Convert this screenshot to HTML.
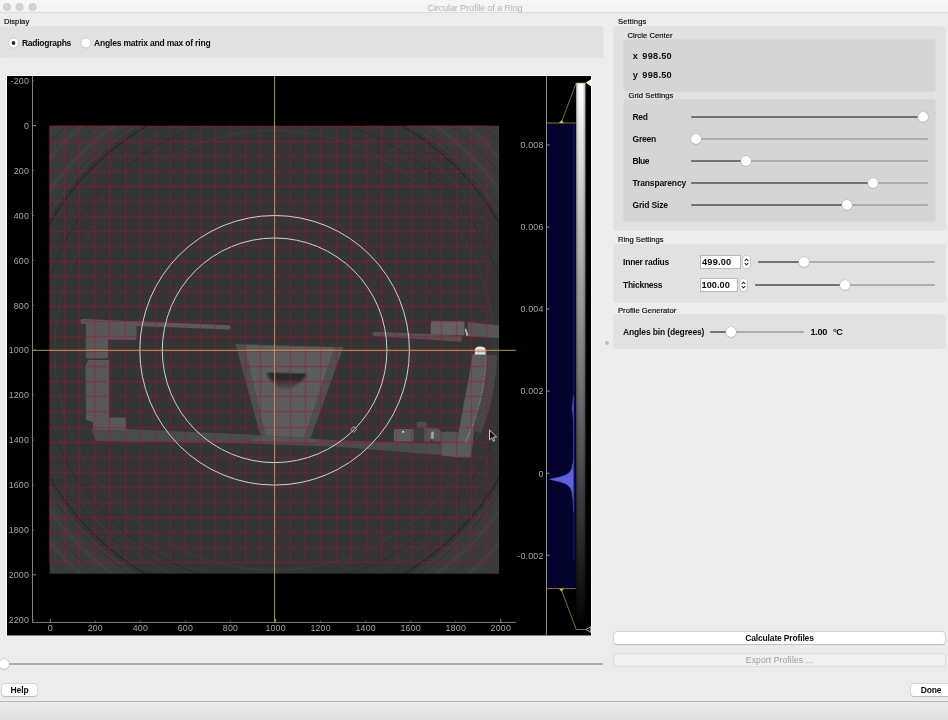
<!DOCTYPE html>
<html lang="en">
<head>
<meta charset="utf-8">
<title>Circular Profile of a Ring</title>
<style>
html,body{margin:0;padding:0;}
body{width:948px;height:720px;overflow:hidden;background:#ececec;position:relative;
  font-family:"Liberation Sans",sans-serif;font-size:7.6px;color:#0c0c0c;}
.abs{position:absolute;}
.t{position:absolute;white-space:nowrap;line-height:12px;height:12px;-webkit-text-stroke:0.18px #0c0c0c;}
.b,.btn{-webkit-text-stroke:0;}
#title{-webkit-text-stroke:0;}
.b{font-weight:bold;font-size:8.5px;}
.n{font-size:9.2px;}
.titlebar{left:0;top:0;width:948px;height:13px;background:linear-gradient(#f7f7f7,#f3f3f3);border-bottom:1px solid #dcdcdc;box-sizing:border-box;}
.tl{position:absolute;top:3px;width:8px;height:8px;border-radius:50%;background:#d4d4d4;box-shadow:inset 0 0 0 0.5px #c4c4c4;}
.gb{position:absolute;background:#e1e1e1;border-radius:2.5px;box-shadow:0 0 0 0.5px #dadada;}
.gb2{position:absolute;background:#d5d5d5;border-radius:2.5px;box-shadow:0 0 0 0.5px #cfcfcf;}
.trk{position:absolute;height:2px;background:#adadad;border-radius:1px;}
.trk i{position:absolute;left:0;top:0;height:2px;background:#727272;border-radius:1px;display:block;}
.knob{position:absolute;width:10px;height:10px;border-radius:50%;background:#fff;box-shadow:0 0 0 0.5px #b4b4b4,0 0.5px 1px rgba(0,0,0,.25);}
.radio{position:absolute;width:10px;height:10px;border-radius:50%;background:#fff;box-shadow:0 0 0 0.5px #b0b0b0,0 0.5px 1px rgba(0,0,0,.15);}
.radio.on:after{content:"";position:absolute;left:3.2px;top:3.2px;width:3.6px;height:3.6px;border-radius:50%;background:#222;}
.btn{position:absolute;background:#fff;border-radius:3px;box-shadow:0 0 0 0.5px #c2c2c2,0 0.5px 1px rgba(0,0,0,.22);text-align:center;font-weight:bold;line-height:12px;font-size:8.5px;}
.spin{position:absolute;background:#fff;border:1px solid #b9b9b9;box-sizing:border-box;}
.step{position:absolute;background:#fff;border-radius:3px;box-shadow:0 0 0 0.5px #b8b8b8,0 0.5px 1px rgba(0,0,0,.2);}
</style>
</head>
<body>
<div id="root" style="position:absolute;left:0;top:0;width:948px;height:720px;will-change:transform;">
<!-- title bar -->
<div class="abs titlebar"></div>
<svg class="abs" style="left:0;top:0" width="40" height="13"><g fill="#d3d3d3" stroke="#c6c6c6" stroke-width="0.5"><circle cx="7" cy="7" r="3.8"/><circle cx="19.6" cy="7" r="3.8"/><circle cx="32.6" cy="7" r="3.8"/></g></svg>
<div class="t" id="title" style="letter-spacing:-0.175px;left:0;width:950px;top:1.6px;text-align:center;color:#b4b4b4;font-size:9.2px;">Circular Profile of a Ring</div>

<!-- left: display group -->
<div class="t" id="lDisplay" style="letter-spacing:0.049px;left:4px;top:15.7px;">Display</div>
<div class="gb" style="left:0;top:27px;width:603px;height:30px;"></div>
<svg class="abs" style="left:6px;top:35px" width="16" height="16"><circle cx="7.5" cy="8" r="5" fill="#fff" stroke="#b4b4b4" stroke-width="0.6"/><circle cx="7.5" cy="8" r="1.9" fill="#2a2a2a"/></svg>
<div class="t b" id="lRadio1" style="letter-spacing:-0.265px;left:22px;top:37px;">Radiographs</div>
<svg class="abs" style="left:78px;top:35px" width="16" height="16"><circle cx="8" cy="8" r="5" fill="#fff" stroke="#b4b4b4" stroke-width="0.6"/></svg>
<div class="t b" id="lRadio2" style="letter-spacing:-0.188px;left:94px;top:37px;">Angles matrix and max of ring</div>

<!-- PLOT -->
<svg class="abs" id="plot" style="left:6px;top:75px;will-change:transform;" width="586" height="561" viewBox="6 75 586 561" font-family="Liberation Sans, sans-serif">
<rect x="6" y="75" width="586" height="561" fill="#fbfbfb"/>
<rect x="7" y="76" width="584" height="559.5" fill="#000"/>
<defs><clipPath id="ic"><rect x="49.5" y="125.6" width="449.6" height="448.2"/></clipPath>
<radialGradient id="hole" cx="0.5" cy="0.2" r="0.8"><stop offset="0" stop-color="#3c3c3c"/><stop offset="0.5" stop-color="#4a4a4a"/><stop offset="1" stop-color="#7c7c7c" stop-opacity="0"/></radialGradient>
<linearGradient id="cb" x1="0" y1="0" x2="0" y2="1"><stop offset="0" stop-color="#fff"/><stop offset="1" stop-color="#000"/></linearGradient>
<linearGradient id="cbx" x1="0" y1="0" x2="1" y2="0"><stop offset="0" stop-color="#000" stop-opacity="0.25"/><stop offset="0.3" stop-color="#000" stop-opacity="0"/><stop offset="0.7" stop-color="#000" stop-opacity="0"/><stop offset="1" stop-color="#000" stop-opacity="0.3"/></linearGradient>
<filter id="bl" x="-5%" y="-5%" width="110%" height="110%"><feGaussianBlur stdDeviation="0.45"/></filter>
<filter id="bh" x="-20%" y="-40%" width="140%" height="200%"><feGaussianBlur stdDeviation="1.3"/></filter>
<linearGradient id="hg" x1="0" y1="0" x2="0" y2="1"><stop offset="0" stop-color="#2a2a2a"/><stop offset="0.42" stop-color="#303030"/><stop offset="1" stop-color="#565656"/></linearGradient>
</defs>
<g clip-path="url(#ic)"><g filter="url(#bl)">
<rect x="49.5" y="125.6" width="449.6" height="448.2" fill="#343434"/>
<circle cx="274.6" cy="350.3" r="312" fill="none" stroke="#454545" stroke-width="100" opacity="0.45"/>
<circle cx="274.6" cy="350.3" r="220" fill="none" stroke="#484848" stroke-width="0.9" opacity="0.55"/>
<circle cx="274.6" cy="350.3" r="236" fill="none" stroke="#282828" stroke-width="1" opacity="0.6"/>
<circle cx="274.6" cy="350.3" r="246" fill="none" stroke="#3e3e3e" stroke-width="2.5" opacity="0.5"/>
<circle cx="274.6" cy="350.3" r="258" fill="none" stroke="#242424" stroke-width="1.4" opacity="0.7"/>
<circle cx="274.6" cy="350.3" r="266" fill="none" stroke="#282828" stroke-width="1" opacity="0.5"/>
<circle cx="274.6" cy="350.3" r="276" fill="none" stroke="#4e4e4e" stroke-width="3" opacity="0.35"/>
<circle cx="274.6" cy="350.3" r="286" fill="none" stroke="#2b2b2b" stroke-width="1" opacity="0.45"/>
<circle cx="274.6" cy="350.3" r="296" fill="none" stroke="#505050" stroke-width="3" opacity="0.3"/>
<circle cx="274.6" cy="350.3" r="306" fill="none" stroke="#303030" stroke-width="1.2" opacity="0.4"/>
<polygon points="91,429 126,429 250,434.5 340,440.5 458,444 472,456 458,456.5 340,447 250,443.5 120,441.5 96,441" fill="#4b4b4b"/>
<path d="M80.5,320.5 Q80.6,318.9 82.5,319 L229,325.3 Q231.3,325.6 231.2,327.6 Q231,329.6 229,329.4 L82.3,323.9 Q80.4,323.8 80.5,322 Z" fill="#5a5a5a"/>
<path d="M87.5,323.5 L136.5,326 L136.5,338 Q136.5,339.9 134.5,339.9 L108,339.6 L108,357 Q108,358.4 106.5,358.4 L87.5,358.4 Q85.8,358.4 85.8,356.6 L85.8,325 Q85.8,323.5 87.5,323.5 Z" fill="#585858"/>
<path d="M88,360 L109,360 L109,417.5 L124,417.5 Q126,417.5 126,419.5 L126,430 L93,430 L93,422 L86,420 L85.5,366 Z" fill="#585858"/>
<polygon points="235.5,344 343.5,347 310.5,438.5 260.5,436" fill="#505050"/>
<polygon points="244.5,345 334,348 304,437.5 266,435.5" fill="#5d5d5d"/>
<polygon points="262,436 310,438.5 330,444 250,441" fill="#555"/>
<path d="M266.5,373 L306.5,374 Q304,381 297,384 Q293,390 286,390 Q279,390 276,384 Q269,381 266.5,373 Z" fill="url(#hg)" filter="url(#bh)"/>
<path d="M268,373 L305.5,374 Q302,379.5 287,379.5 Q272,379.5 268,373 Z" fill="#2b2b2b" filter="url(#bl)"/>
<path d="M372,333.6 Q372.5,331.6 376,331.7 L440,334.5 L461.5,336 L461.5,341.8 L376,336.3 Q372.5,336 372,333.6 Z" fill="#525252"/>
<path d="M432.5,320.8 L463,321.2 Q464.6,321.3 464.5,323 L464.3,335.5 L432,334.5 Q430.6,334.4 430.7,333 L430.9,322.3 Q431,320.8 432.5,320.8 Z" fill="#626262"/>
<polygon points="467.8,322 499.5,325.5 499.5,338 468.4,336.4" fill="#565656"/>
<polygon points="464.6,329 466.2,328.4 468.6,335.6 466.4,336" fill="#b0b0b0"/>
<path d="M497.1,355.0 A222.5,222.5 0 0 1 480.9,433.6 L471.2,429.7 A212,212 0 0 0 486.6,354.7 Z" fill="#464646"/>
<path d="M475.8,431.6 A217,217 0 0 1 467.1,450.5 L462.6,448.2 A212,212 0 0 0 471.2,429.7 Z" fill="#404040"/>
<path d="M472.6,354 L486.3,354 A211.7,211.7 0 0 1 473.5,422.7 L473,441 L471,457.3 L455.5,457.3 L457.2,441.6 L462.6,410 L468.4,380 Z" fill="#5c5c5c"/>
<path d="M474.8,354.6 L474.8,350.5 Q475,346.6 479.5,346.6 L482.5,346.8 Q485.9,347.2 485.8,350.8 L485.6,354.6 Z" fill="#e6e6e6"/>
<path d="M486.3,354.0 A211.7,211.7 0 0 1 457.4,457.1" fill="none" stroke="#b4b4b4" stroke-width="0.8" stroke-dasharray="1.2 0.9"/>
<rect x="393.9" y="429" width="19.8" height="12.5" fill="#5c5c5c"/>
<polygon points="416.7,422 426.8,421.7 427,428 416.7,428.5" fill="#4e4e4e"/>
<rect x="413.7" y="428.5" width="10.5" height="13" fill="#3c3c3c"/>
<polygon points="424.2,428 439,428.6 441,432.5 447,431.5 458.5,432 458.5,442 424.2,441.6" fill="#555"/>
<polygon points="440.8,441.6 458,442 471,444 471,457.3 455,457 440.8,455.4" fill="#5a5a5a"/>
<path d="M431.2,432 L434,431.6 L433.6,439 L430.8,438.6 Z" fill="#a0a0a0"/>
<rect x="402.4" y="431.1" width="1.6" height="1.6" fill="#f2f2f2"/>
<circle cx="431.5" cy="441" r="1.2" fill="#333"/>
</g></g>
<path d="M49.50,125.60V563.00M64.50,125.60V563.00M79.50,125.60V563.00M94.50,125.60V563.00M109.50,125.60V563.00M125.50,125.60V563.00M140.50,125.60V563.00M155.50,125.60V563.00M170.50,125.60V563.00M185.50,125.60V563.00M200.50,125.60V563.00M215.50,125.60V563.00M230.50,125.60V563.00M245.50,125.60V563.00M260.50,125.60V563.00M275.50,125.60V563.00M290.50,125.60V563.00M305.50,125.60V563.00M320.50,125.60V563.00M336.50,125.60V563.00M351.50,125.60V563.00M366.50,125.60V563.00M381.50,125.60V563.00M396.50,125.60V563.00M411.50,125.60V563.00M426.50,125.60V563.00M441.50,125.60V563.00M456.50,125.60V563.00M471.50,125.60V563.00M486.50,125.60V563.00" fill="none" stroke="#aa1432" stroke-opacity="0.42" stroke-width="1.3"/>
<path d="M49.50,126.50H487.00M49.50,141.50H487.00M49.50,156.50H487.00M49.50,171.50H487.00M49.50,186.50H487.00M49.50,201.50H487.00M49.50,216.50H487.00M49.50,231.50H487.00M49.50,246.50H487.00M49.50,261.50H487.00M49.50,276.50H487.00M49.50,291.50H487.00M49.50,306.50H487.00M49.50,321.50H487.00M49.50,336.50H487.00M49.50,351.50H487.00M49.50,366.50H487.00M49.50,381.50H487.00M49.50,396.50H487.00M49.50,411.50H487.00M49.50,427.50H487.00M49.50,442.50H487.00M49.50,457.50H487.00M49.50,472.50H487.00M49.50,487.50H487.00M49.50,502.50H487.00M49.50,517.50H487.00M49.50,532.50H487.00M49.50,547.50H487.00M49.50,562.50H487.00" fill="none" stroke="#aa1432" stroke-opacity="0.42" stroke-width="1.3"/>
<circle cx="274.6" cy="350.3" r="112.3" fill="none" stroke="#d0d0d0" stroke-width="1"/>
<circle cx="274.6" cy="350.3" r="134.8" fill="none" stroke="#d0d0d0" stroke-width="1"/>
<path d="M274.6,76V622.4M32.5,350.3H516" fill="none" stroke="#b9ad55" stroke-width="0.9"/>
<path d="M353.7,426.6 L356.6,429.5 L353.7,432.4 L350.8,429.5 Z" fill="none" stroke="#9fd4dc" stroke-width="0.8"/>
<path d="M32.5,76V622.4H516" fill="none" stroke="#8e8e8e" stroke-width="0.9"/>
<path d="M32.5,125.60h3.6M32.5,350.20h3.6M32.5,574.80h3.6M50.30,622.4v-3.6M275.55,622.4v-3.6M500.80,622.4v-3.6" fill="none" stroke="#8e8e8e" stroke-width="1"/>
<path d="M32.5,80.68h1.6M32.5,170.52h1.6M32.5,215.44h1.6M32.5,260.36h1.6M32.5,305.28h1.6M32.5,395.12h1.6M32.5,440.04h1.6M32.5,484.96h1.6M32.5,529.88h1.6M32.5,619.72h1.6M95.35,622.4v-1.6M140.40,622.4v-1.6M185.45,622.4v-1.6M230.50,622.4v-1.6M320.60,622.4v-1.6M365.65,622.4v-1.6M410.70,622.4v-1.6M455.75,622.4v-1.6" fill="none" stroke="#6a6a6a" stroke-width="1"/>
<g fill="#a6a6a6" font-size="8.8" letter-spacing="0.2">
<text x="29" y="83.9" text-anchor="end">-200</text>
<text x="29" y="128.8" text-anchor="end">0</text>
<text x="29" y="173.7" text-anchor="end">200</text>
<text x="29" y="218.6" text-anchor="end">400</text>
<text x="29" y="263.6" text-anchor="end">600</text>
<text x="29" y="308.5" text-anchor="end">800</text>
<text x="29" y="353.4" text-anchor="end">1000</text>
<text x="29" y="398.3" text-anchor="end">1200</text>
<text x="29" y="443.2" text-anchor="end">1400</text>
<text x="29" y="488.2" text-anchor="end">1600</text>
<text x="29" y="533.1" text-anchor="end">1800</text>
<text x="29" y="578.0" text-anchor="end">2000</text>
<text x="29" y="622.9" text-anchor="end">2200</text>
<text x="50.3" y="630.8" text-anchor="middle">0</text>
<text x="95.3" y="630.8" text-anchor="middle">200</text>
<text x="140.4" y="630.8" text-anchor="middle">400</text>
<text x="185.4" y="630.8" text-anchor="middle">600</text>
<text x="230.5" y="630.8" text-anchor="middle">800</text>
<text x="275.6" y="630.8" text-anchor="middle">1000</text>
<text x="320.6" y="630.8" text-anchor="middle">1200</text>
<text x="365.7" y="630.8" text-anchor="middle">1400</text>
<text x="410.7" y="630.8" text-anchor="middle">1600</text>
<text x="455.8" y="630.8" text-anchor="middle">1800</text>
<text x="500.8" y="630.8" text-anchor="middle">2000</text>
<text x="543.5" y="148.3" text-anchor="end">0.008</text>
<text x="543.5" y="230.3" text-anchor="end">0.006</text>
<text x="543.5" y="312.4" text-anchor="end">0.004</text>
<text x="543.5" y="394.4" text-anchor="end">0.002</text>
<text x="543.5" y="476.5" text-anchor="end">0</text>
<text x="543.5" y="558.6" text-anchor="end">-0.002</text>
</g>
<path d="M546.5,76V635.5" stroke="#8e8e8e" stroke-width="1" fill="none"/>
<rect x="547" y="123" width="28.8" height="465.6" fill="#03032e"/>
<path d="M546.5,144.96h3M546.5,227.02h3M546.5,309.08h3M546.5,391.14h3M546.5,473.20h3M546.5,555.26h3" fill="none" stroke="#8e8e8e" stroke-width="1"/>
<path d="M547,123H575.8M547,588.6H575.8" stroke="#8a8440" stroke-width="0.9" fill="none"/>
<path d="M573.6,395 L573,400 L572.4,405 L572.2,410 L573,415 L573.6,425 L573.6,455 L573,462 L572,468 L570,472 L566,475 L560,477 L553,478.6 L549.5,479.2 L553,480.2 L560,481.8 L566,484 L570,487 L572,492 L573,500 L573.6,512 L573.6,395 Z" fill="#5b63e0" stroke="#5b63e0" stroke-width="0.4"/>
<path d="M574,124V560" stroke="#262a80" stroke-width="0.7"/>
<rect x="576.2" y="83" width="9.2" height="546.5" fill="url(#cb)"/>
<rect x="576.2" y="83" width="9.2" height="546.5" fill="url(#cbx)"/>
<path d="M547,123H575.8" stroke="#9c8c3c" stroke-width="0" fill="none"/>
<path d="M561.5,122 L576.2,83 H586 M561.5,590 L576.2,629.5 H586" fill="none" stroke="#a39642" stroke-width="0.75"/>
<path d="M559,123 L561.5,120.3 L564,123 Z M559,588.8 L561.5,591.6 L564,588.8 Z" fill="#d8c040"/>
<path d="M585.8,82.8 L591,79.3 L591,86.3 Z" fill="#fff"/>
<path d="M586,629.5 L590.6,626.6 L590.6,632.4 Z" fill="#111" stroke="#e8e8e8" stroke-width="0.7"/>
<path d="M489.5,430 L489.5,439.9 L491.7,437.9 L493.2,441.3 L494.7,440.6 L493.2,437.3 L496.5,436.9 Z" fill="#111" stroke="#f4f4f4" stroke-width="0.8" stroke-linejoin="round"/>
</svg>

<!-- bottom slider -->
<div class="trk" style="left:0;top:663px;width:603px;"></div>
<div class="knob" style="left:-1px;top:659px;"></div>

<!-- Help / Done -->
<div class="btn" id="bHelp" style="left:2px;top:683.5px;width:35px;height:12.5px;"><span id="sHelp" style="letter-spacing:-0.074px">Help</span></div>
<div class="btn" id="bDone" style="left:911px;top:683.5px;width:40px;height:12.5px;"><span id="sDone" style="letter-spacing:-0.183px">Done</span></div>

<!-- status bar -->
<div class="abs" style="left:0;top:701px;width:948px;height:19px;background:linear-gradient(#ececec,#dedede);border-top:1px solid #b5b5b5;box-sizing:border-box;"></div>

<!-- right: settings -->
<div class="t" id="lSettings" style="letter-spacing:0.121px;left:618px;top:15.7px;">Settings</div>
<div class="gb" style="left:613.5px;top:26.5px;width:331px;height:203px;"></div>
<div class="t" id="lCC" style="letter-spacing:0.057px;left:627.5px;top:29.7px;">Circle Center</div>
<div class="gb2" style="left:623.5px;top:39.5px;width:311.5px;height:51.5px;"></div>
<div class="t b n" id="lx" style="left:632.7px;top:50px;">x</div><div class="t b n" id="nx" style="letter-spacing:0.258px;left:642.3px;top:50px;">998.50</div>
<div class="t b n" id="ly" style="left:632.7px;top:69px;">y</div><div class="t b n" id="ny" style="letter-spacing:0.258px;left:642.3px;top:69px;">998.50</div>
<div class="t" id="lGS" style="letter-spacing:0.083px;left:628.5px;top:89.7px;">Grid Settings</div>
<div class="gb2" style="left:623.5px;top:99.5px;width:311.5px;height:121px;"></div>
<div class="t b" id="lRed" style="letter-spacing:-0.331px;left:632.5px;top:110.5px;">Red</div>
<div class="t b" id="lGreen" style="letter-spacing:-0.195px;left:632.5px;top:132.5px;">Green</div>
<div class="t b" id="lBlue" style="letter-spacing:-0.441px;left:632.5px;top:154.5px;">Blue</div>
<div class="t b" id="lTr" style="letter-spacing:-0.144px;left:632.5px;top:176.5px;">Transparency</div>
<div class="t b" id="lGSz" style="letter-spacing:-0.168px;left:632.5px;top:198.5px;">Grid Size</div>
<div class="trk" style="left:691px;top:115.5px;width:236.5px;"><i style="width:232px"></i></div><div class="knob" style="left:918px;top:111.5px;"></div>
<div class="trk" style="left:691px;top:137.5px;width:236.5px;"><i style="width:4px"></i></div><div class="knob" style="left:690.5px;top:133.5px;"></div>
<div class="trk" style="left:691px;top:159.5px;width:236.5px;"><i style="width:55px"></i></div><div class="knob" style="left:741px;top:155.5px;"></div>
<div class="trk" style="left:691px;top:181.5px;width:236.5px;"><i style="width:181px"></i></div><div class="knob" style="left:867.5px;top:177.5px;"></div>
<div class="trk" style="left:691px;top:203.5px;width:236.5px;"><i style="width:156px"></i></div><div class="knob" style="left:842px;top:199.5px;"></div>

<div class="t" id="lRS" style="letter-spacing:0.027px;left:618px;top:234.2px;">Ring Settings</div>
<div class="gb" style="left:613.5px;top:244.5px;width:331.5px;height:57px;"></div>
<div class="t b" id="lIR" style="letter-spacing:-0.214px;left:623px;top:255.5px;">Inner radius</div>
<div class="spin" style="left:699.5px;top:254.5px;width:41px;height:14px;"></div>
<div class="t b n" id="n499" style="letter-spacing:0.218px;left:702px;top:255.5px;">499.00</div>
<div class="step" style="left:743.2px;top:255.5px;width:7px;height:12px;"></div>
<svg class="abs" style="left:743.2px;top:255.5px" width="7" height="12" viewBox="0 0 7 12"><path d="M2 4.6 L3.5 3.1 L5 4.6 M2 7.4 L3.5 8.9 L5 7.4" fill="none" stroke="#2a2a2a" stroke-width="1.05" stroke-linecap="round" stroke-linejoin="round"/></svg>
<div class="trk" style="left:758px;top:260.5px;width:176.5px;"><i style="width:46px"></i></div><div class="knob" style="left:799px;top:256.5px;"></div>

<div class="t b" id="lTh" style="letter-spacing:-0.260px;left:623px;top:279px;">Thickness</div>
<div class="spin" style="left:699.5px;top:277.8px;width:38px;height:14px;"></div>
<div class="t b n" id="n100" style="letter-spacing:0.018px;left:701.6px;top:279px;">100.00</div>
<div class="step" style="left:740.3px;top:278.8px;width:7px;height:12px;"></div>
<svg class="abs" style="left:740.3px;top:278.8px" width="7" height="12" viewBox="0 0 7 12"><path d="M2 4.6 L3.5 3.1 L5 4.6 M2 7.4 L3.5 8.9 L5 7.4" fill="none" stroke="#2a2a2a" stroke-width="1.05" stroke-linecap="round" stroke-linejoin="round"/></svg>
<div class="trk" style="left:755px;top:284px;width:179.5px;"><i style="width:90px"></i></div><div class="knob" style="left:840px;top:280px;"></div>

<div class="t" id="lPG" style="letter-spacing:0.023px;left:618px;top:304.7px;">Profile Generator</div>
<div class="gb" style="left:613.5px;top:314.5px;width:331.5px;height:33px;"></div>
<div class="t b" id="lAB" style="letter-spacing:-0.141px;left:623px;top:325.5px;">Angles bin (degrees)</div>
<div class="trk" style="left:709.5px;top:330.5px;width:94.5px;"><i style="width:21px"></i></div><div class="knob" style="left:725.5px;top:326.5px;"></div>
<div class="t b n" id="l100" style="letter-spacing:-0.330px;left:810.5px;top:325.5px;">1.00</div>
<div class="t b n" id="ldc" style="letter-spacing:-0.312px;left:833px;top:325.5px;">°C</div>

<div class="abs" style="left:604.7px;top:340.8px;width:4px;height:4px;border-radius:50%;background:#bdbdbd;"></div>

<div class="btn" id="bCalc" style="left:614px;top:632px;width:331px;height:12px;"><span id="sCalc" style="letter-spacing:-0.156px">Calculate Profiles</span></div>
<div class="btn" id="bExp" style="left:614px;top:654px;width:331px;height:12px;background:#f1f1f1;color:#9a9a9a;font-weight:normal;box-shadow:0 0 0 0.5px #cdcdcd;"><span id="sExp" style="letter-spacing:0.138px">Export Profiles ...</span></div>
</div>
</body>
</html>
